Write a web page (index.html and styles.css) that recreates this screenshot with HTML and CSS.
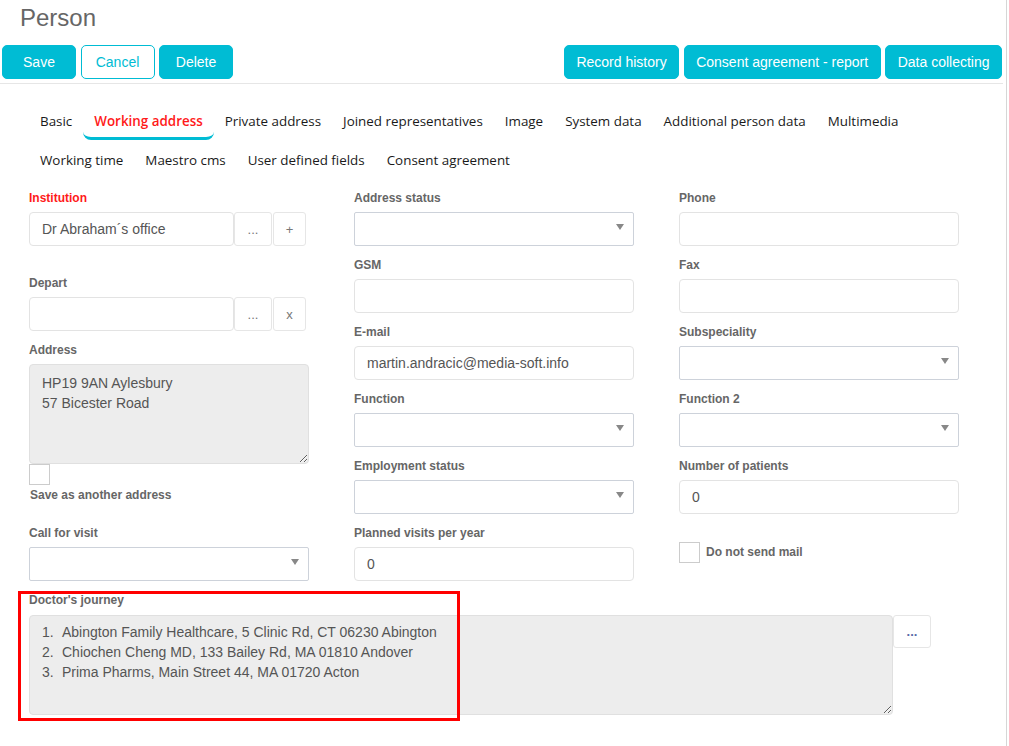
FILE: index.html
```html
<!DOCTYPE html>
<html lang="en">
<head>
    <meta charset="UTF-8">
    <title>Person</title>
    <link rel="stylesheet" href="styles.css">
</head>
<body>
    <div class="page">
        <h1 class="title">Person</h1>

        <div class="toolbar">
            <div class="toolbar-left">
                <button class="btn">Save</button>
                <button class="btn btn-outline">Cancel</button>
                <button class="btn">Delete</button>
            </div>
            <div class="toolbar-right">
                <button class="btn">Record history</button>
                <button class="btn">Consent agreement - report</button>
                <button class="btn">Data collecting</button>
            </div>
        </div>

        <ul class="tabs">
            <li class="tab">Basic</li>
            <li class="tab active">Working address</li>
            <li class="tab">Private address</li>
            <li class="tab">Joined representatives</li>
            <li class="tab">Image</li>
            <li class="tab">System data</li>
            <li class="tab">Additional person data</li>
            <li class="tab">Multimedia</li>
            <li class="tab">Working time</li>
            <li class="tab">Maestro cms</li>
            <li class="tab">User defined fields</li>
            <li class="tab">Consent agreement</li>
        </ul>

        <div class="form">
            <div class="col">
                <div class="field field-wide-gap">
                    <label class="required">Institution</label>
                    <div class="input-group">
                        <input class="input" type="text" value="Dr Abraham´s office">
                        <button class="side-btn">...</button>
                        <button class="side-btn side-btn-sm">+</button>
                    </div>
                </div>
                <div class="field">
                    <label>Depart</label>
                    <div class="input-group">
                        <input class="input" type="text">
                        <button class="side-btn">...</button>
                        <button class="side-btn side-btn-sm">x</button>
                    </div>
                </div>
                <div class="field field-tight">
                    <label>Address</label>
                    <textarea class="textarea" readonly>HP19 9AN Aylesbury
57 Bicester Road</textarea>
                </div>
                <input type="checkbox" class="check">
                <label class="check-caption">Save as another address</label>
                <div class="field field-call">
                    <label>Call for visit</label>
                    <div class="select">
                        <svg width="8" height="6" viewBox="0 0 8 6"><path d="M0 0h8L4 6z" fill="#888"/></svg>
                    </div>
                </div>
            </div>

            <div class="col">
                <div class="field">
                    <label>Address status</label>
                    <div class="select">
                        <svg width="8" height="6" viewBox="0 0 8 6"><path d="M0 0h8L4 6z" fill="#888"/></svg>
                    </div>
                </div>
                <div class="field">
                    <label>GSM</label>
                    <input class="input" type="text">
                </div>
                <div class="field">
                    <label>E-mail</label>
                    <input class="input" type="text" value="martin.andracic@media-soft.info">
                </div>
                <div class="field">
                    <label>Function</label>
                    <div class="select">
                        <svg width="8" height="6" viewBox="0 0 8 6"><path d="M0 0h8L4 6z" fill="#888"/></svg>
                    </div>
                </div>
                <div class="field">
                    <label>Employment status</label>
                    <div class="select">
                        <svg width="8" height="6" viewBox="0 0 8 6"><path d="M0 0h8L4 6z" fill="#888"/></svg>
                    </div>
                </div>
                <div class="field">
                    <label>Planned visits per year</label>
                    <input class="input" type="text" value="0">
                </div>
            </div>

            <div class="col">
                <div class="field">
                    <label>Phone</label>
                    <input class="input" type="text">
                </div>
                <div class="field">
                    <label>Fax</label>
                    <input class="input" type="text">
                </div>
                <div class="field">
                    <label>Subspeciality</label>
                    <div class="select">
                        <svg width="8" height="6" viewBox="0 0 8 6"><path d="M0 0h8L4 6z" fill="#888"/></svg>
                    </div>
                </div>
                <div class="field">
                    <label>Function 2</label>
                    <div class="select">
                        <svg width="8" height="6" viewBox="0 0 8 6"><path d="M0 0h8L4 6z" fill="#888"/></svg>
                    </div>
                </div>
                <div class="field">
                    <label>Number of patients</label>
                    <input class="input" type="text" value="0">
                </div>
                <div class="check-row">
                    <input type="checkbox" class="check">
                    <label>Do not send mail</label>
                </div>
            </div>
        </div>

        <div class="journey">
            <label>Doctor's journey</label>
            <div class="journey-row">
                <div class="journey-box">
                    <ol class="journey-list">
                        <li><span class="num">1.</span>Abington Family Healthcare, 5 Clinic Rd, CT 06230 Abington</li>
                        <li><span class="num">2.</span>Chiochen Cheng MD, 133 Bailey Rd, MA 01810 Andover</li>
                        <li><span class="num">3.</span>Prima Pharms, Main Street 44, MA 01720 Acton</li>
                    </ol>
                </div>
                <button class="side-btn journey-btn">...</button>
            </div>
            <div class="highlight"></div>
        </div>
    </div>
</body>
</html>
```

FILE: styles.css
```css
* {
    margin: 0;
    padding: 0;
    box-sizing: border-box;
}

body {
    font-family: "Liberation Sans", Arial, sans-serif;
    background: white;
    color: #555;
}

.page {
    width: 1007px;
    min-height: 746px;
    border-right: 1px solid #d6d6d6;
    padding-right: 3px;
}

.title {
    font-size: 24px;
    font-weight: normal;
    line-height: 26px;
    color: #666;
    padding: 5px 0 0 20px;
}

/* toolbar */
.toolbar {
    display: flex;
    justify-content: space-between;
    margin-top: 14px;
    padding: 0 1px 4px 2px;
    border-bottom: 1px solid #e6e6e6;
}

.toolbar-left,
.toolbar-right {
    display: flex;
    gap: 4.5px;
}

.btn {
    min-width: 74px;
    height: 34px;
    padding: 0 11.5px;
    background: #00bcd4;
    color: white;
    border: 1px solid #00bcd4;
    border-radius: 5px;
    font-family: "Liberation Sans", Arial, sans-serif;
    font-size: 14px;
}

.btn-outline {
    background: white;
    color: #00bcd4;
}

/* tabs */
.tabs {
    list-style: none;
    display: flex;
    flex-wrap: wrap;
    row-gap: 3px;
    width: 940px;
    margin: 20px 0 0 29px;
}

.tab {
    padding: 8px 11px 7px;
    line-height: 18px;
    font-family: "Open Sans", "Noto Sans", sans-serif;
    font-size: 13.4px;
    color: #1a1a1a;
    border-bottom: 3px solid transparent;
}

.tab.active {
    color: #ff1a1a;
    font-weight: 600;
    border-bottom-color: #00bcd4;
    border-radius: 0 0 8px 8px;
}

/* form */
.form {
    display: grid;
    grid-template-columns: 280px 280px 280px;
    column-gap: 45px;
    padding: 11px 0 0 29px;
}

label {
    display: block;
    font-size: 12px;
    font-weight: bold;
    line-height: 16px;
    color: #666;
}

label.required {
    color: #ff1a1a;
}

.field {
    margin-bottom: 11px;
}

.field:last-child {
    margin-bottom: 0;
}

.field > label {
    margin-bottom: 6px;
}

.field-wide-gap {
    margin-bottom: 29px;
}

.field-tight {
    margin-bottom: 0;
}

.field-call {
    margin-top: 22px;
}

.input {
    display: block;
    width: 100%;
    height: 34px;
    padding: 0 12px;
    border: 1px solid #e3e3e3;
    border-radius: 4px;
    font-family: "Liberation Sans", Arial, sans-serif;
    font-size: 14px;
    color: #555;
    background: white;
}

.input-group {
    display: flex;
    width: 277px;
}

.input-group .input {
    width: 205px;
    flex: none;
}

.side-btn {
    width: 38px;
    height: 34px;
    background: white;
    border: 1px solid #e6e6e6;
    border-radius: 3px;
    font-family: "Liberation Sans", Arial, sans-serif;
    font-size: 13px;
    color: #777;
}

.side-btn-sm {
    width: 33px;
    margin-left: 1px;
}

.select {
    height: 34px;
    border: 1px solid #cdd2da;
    border-radius: 2px;
    display: flex;
    align-items: center;
    justify-content: flex-end;
    padding: 0 9px 4px 0;
    background: white;
}

.textarea {
    display: block;
    width: 280px;
    height: 100px;
    padding: 8px 12px;
    background: #ededed;
    border: 1px solid #e0e0e0;
    border-radius: 4px;
    font-family: "Liberation Sans", Arial, sans-serif;
    font-size: 14px;
    line-height: 20px;
    color: #555;
    resize: both;
}

.check {
    appearance: none;
    display: block;
    width: 21px;
    height: 21px;
    border: 1px solid #cccccc;
    background: white;
    flex: none;
}

.check-caption {
    margin-top: 2px;
    padding-left: 1px;
}

.check-row {
    display: flex;
    margin-top: 28px;
}

.check-row label {
    margin: 2px 0 0 6px;
}

/* doctor's journey */
.journey {
    position: relative;
    margin: 11px 0 0 29px;
}

.journey > label {
    margin-bottom: 7px;
}

.journey-row {
    display: flex;
    align-items: flex-start;
}

.journey-box {
    width: 864px;
    height: 100px;
    padding: 6px 12px;
    background: #ededed;
    border: 1px solid #e0e0e0;
    border-radius: 4px;
    overflow: auto;
    resize: both;
}

.journey-list {
    list-style: none;
    font-size: 14px;
    line-height: 20px;
    color: #555;
}

.num {
    display: inline-block;
    width: 20px;
}

.journey-btn {
    height: 33px;
    color: #5a6aa8;
    font-weight: bold;
}

.highlight {
    position: absolute;
    left: -11px;
    top: -1px;
    width: 442px;
    height: 130px;
    border: 3px solid #ff0000;
    pointer-events: none;
}
```
